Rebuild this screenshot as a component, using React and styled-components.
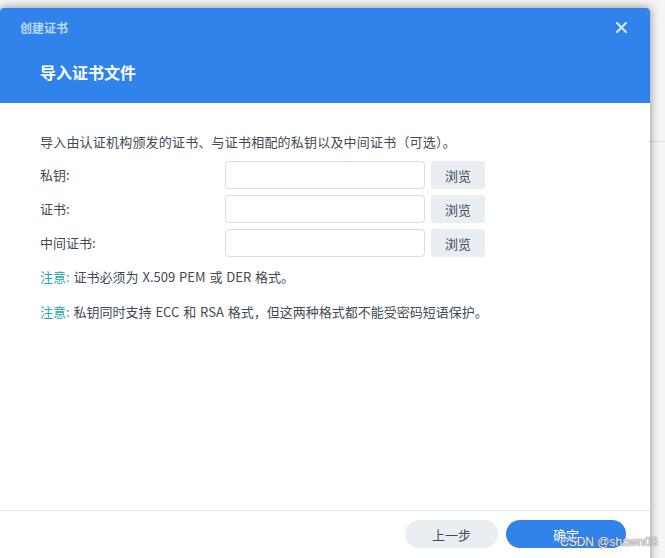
import React from 'react';
import styled, { createGlobalStyle } from 'styled-components';

const GlobalStyle = createGlobalStyle`
    html, body {
        margin: 0;
        padding: 0;
    }
    body {
        font-family: "Noto Sans CJK SC", "Noto Sans", sans-serif;
        background: #f5f5f5;
    }
`;

const Page = styled.div`
    position: relative;
    width: 665px;
    height: 558px;
    overflow: hidden;
    padding-top: 8px;
    box-sizing: border-box;
    background:
        linear-gradient(#dcdcdc, #dcdcdc) 0 141px / 100% 1px no-repeat,
        #f5f5f5;
`;

const Dialog = styled.div`
    width: 650px;
    height: 560px;
    background: #fff;
    border-radius: 4px 4px 0 0;
    box-shadow: 0 0 10px rgba(0, 0, 0, 0.45);
    display: flex;
    flex-direction: column;
`;

const Header = styled.div`
    background: #3083eb;
    height: 95px;
    border-radius: 4px 4px 0 0;
    display: flex;
    flex-direction: column;
    box-sizing: border-box;
    padding: 9px 20px 0 20px;
`;

const TopRow = styled.div`
    display: flex;
    align-items: center;
    justify-content: space-between;
    height: 20px;
`;

const SmallTitle = styled.div`
    font-size: 12px;
    font-weight: bold;
    color: rgba(255, 255, 255, 0.7);
`;

const Close = styled.div`
    width: 14px;
    height: 14px;
    margin-right: 2px;
    display: flex;
    align-items: center;
    justify-content: center;
`;

const Title = styled.div`
    margin-top: 23px;
    padding-left: 20px;
    font-size: 16px;
    font-weight: bold;
    color: #fff;
    line-height: 24px;
`;

const Body = styled.div`
    flex: 1;
    padding: 29px 40px 0 40px;
    color: #414b55;
    font-size: 13px;
`;

const Desc = styled.div`
    line-height: 20px;
    margin-bottom: 9px;
    letter-spacing: 0.2px;
`;

const Rows = styled.div`
    display: flex;
    flex-direction: column;
    gap: 6px;
`;

const Row = styled.div`
    display: grid;
    grid-template-columns: 179px 200px 54px;
    column-gap: 6px;
    align-items: center;
    height: 28px;
`;

const Label = styled.div`
    line-height: 20px;
`;

const Input = styled.div`
    height: 28px;
    box-sizing: border-box;
    border: 1px solid #d5dde7;
    border-radius: 4px;
    background: #fff;
`;

const Browse = styled.div`
    height: 28px;
    border-radius: 3px;
    background: #e9eef3;
    display: flex;
    align-items: center;
    justify-content: center;
    color: #414b55;
`;

const Note = styled.div`
    line-height: 20px;
    margin-top: ${({ first }) => (first ? '10px' : '15px')};
    word-spacing: 1px;
`;

const NoteTag = styled.span`
    color: #21a8a8;
`;

const Footer = styled.div`
    border-top: 1px solid #e3e8ef;
    height: 48px;
    display: flex;
    justify-content: flex-end;
    align-items: flex-start;
    padding: 9px 24px 0 0;
    gap: 8px;
`;

const Button = styled.div`
    width: ${({ wide }) => (wide ? '120px' : '93px')};
    height: 28px;
    border-radius: 14px;
    display: flex;
    align-items: center;
    justify-content: center;
    font-size: 13px;
    background: ${({ primary }) => (primary ? '#3083eb' : '#e9eef3')};
    color: ${({ primary }) => (primary ? '#fff' : '#414b55')};
`;

const Watermark = styled.div`
    position: absolute;
    left: 560px;
    top: 535px;
    white-space: nowrap;
    font-family: "Liberation Sans", Arial, sans-serif;
    font-size: 12px;
    color: rgba(255, 255, 255, 0.9);
    text-shadow: 0 0 1px #666, 0 0 1px #666;
`;

const App = () => {
    const fields = ['私钥:', '证书:', '中间证书:'];

    return (
        <>
            <GlobalStyle />
            <Page>
                <Dialog>
                    <Header>
                        <TopRow>
                            <SmallTitle>创建证书</SmallTitle>
                            <Close>
                                <svg width="11" height="11" viewBox="0 0 11 11">
                                    <path d="M1 1L10 10M10 1L1 10" stroke="rgba(255,255,255,0.8)" strokeWidth="2.2" strokeLinecap="round" />
                                </svg>
                            </Close>
                        </TopRow>
                        <Title>导入证书文件</Title>
                    </Header>
                    <Body>
                        <Desc>导入由认证机构颁发的证书、与证书相配的私钥以及中间证书（可选）。</Desc>
                        <Rows>
                            {fields.map((f) => (
                                <Row key={f}>
                                    <Label>{f}</Label>
                                    <Input />
                                    <Browse>浏览</Browse>
                                </Row>
                            ))}
                        </Rows>
                        <Note first>
                            <NoteTag>注意:</NoteTag> 证书必须为 X.509 PEM 或 DER 格式。
                        </Note>
                        <Note>
                            <NoteTag>注意:</NoteTag> 私钥同时支持 ECC 和 RSA 格式，但这两种格式都不能受密码短语保护。
                        </Note>
                    </Body>
                    <Footer>
                        <Button>上一步</Button>
                        <Button primary wide>确定</Button>
                    </Footer>
                </Dialog>
                <Watermark>CSDN @shawn08</Watermark>
            </Page>
        </>
    );
};

export default App;
